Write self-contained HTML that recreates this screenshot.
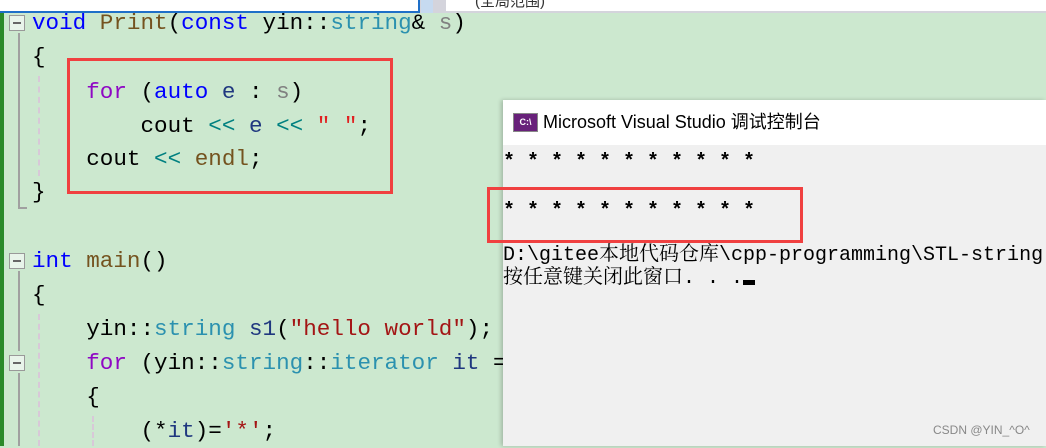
<!DOCTYPE html>
<html><head><meta charset="utf-8"><style>
body{margin:0;width:1046px;height:446px;overflow:hidden;background:#cce8cf;position:relative;font-family:"Liberation Mono","Noto Serif CJK SC",monospace}
.l{position:absolute;left:32px;font-size:22.6px;line-height:34px;white-space:pre;color:#000}
.k{color:#0000ff}.f{color:#74531f}.t{color:#2b91af}.p{color:#808080}.c{color:#8f08c4}.o{color:#008080}.s{color:#a31515}.v{color:#1f377f}.r{color:#e02020}
.box{position:absolute;width:14px;height:14px;border:1.5px solid #999;left:9px;background:#e8f4ea}
.box:after{content:"";position:absolute;left:3px;top:6px;width:8px;height:2px;background:#666}
.red{position:absolute;border:3px solid #f04040}
.con{position:absolute;left:503px;top:100px;right:0;bottom:0;background:#f0f0f0;box-shadow:-2px 0 4px rgba(0,0,0,.2)}
.cl{position:absolute;left:0;font-size:20px;line-height:23px;white-space:pre;color:#000;font-family:"Liberation Mono","Noto Serif CJK SC",monospace}
</style></head><body>
<div style="position:absolute;left:0;top:0;width:1046px;height:13px;background:#d4d4dc"></div>
<div style="position:absolute;left:0;top:0;width:418px;height:11px;background:#fff;border-right:2px solid #1e6fc8;border-bottom:2px solid #1e6fc8"></div>
<div style="position:absolute;left:421px;top:0;width:12px;height:13px;background:#c6daf0"></div>
<div style="position:absolute;left:446px;top:0;width:590px;height:11px;background:#fff;font-family:'Liberation Sans','Noto Sans CJK SC',sans-serif;font-size:15px;line-height:4px;color:#333;padding-left:29px;overflow:hidden">(全局范围)</div>
<div style="position:absolute;left:0;top:13px;width:4px;height:433px;background:#2a8a2a"></div>
<div class="box" style="top:15px"></div>
<div style="position:absolute;left:18px;top:33px;width:2px;height:175px;background:#a0a0a0"></div>
<div style="position:absolute;left:18px;top:207px;width:9px;height:2px;background:#a0a0a0"></div>
<div class="box" style="top:253px"></div>
<div style="position:absolute;left:18px;top:271px;width:2px;height:80px;background:#a0a0a0"></div>
<div class="box" style="top:355px"></div>
<div style="position:absolute;left:18px;top:373px;width:2px;height:73px;background:#a0a0a0"></div>
<div style="position:absolute;left:38px;top:76px;width:0;height:100px;border-left:2px dashed #d8c8d8"></div>
<div style="position:absolute;left:38px;top:314px;width:0;height:132px;border-left:2px dashed #d8c8d8"></div>
<div style="position:absolute;left:92px;top:416px;width:0;height:30px;border-left:2px dashed #d8c8d8"></div>

<div class="l" style="top:6px"><span class="k">void</span> <span class="f">Print</span>(<span class="k">const</span> yin::<span class="t">string</span>&amp; <span class="p">s</span>)</div>
<div class="l" style="top:40px">{</div>
<div class="l" style="top:75px">    <span class="c">for</span> (<span class="k">auto</span> <span class="v">e</span> : <span class="p">s</span>)</div>
<div class="l" style="top:109px">        cout <span class="o">&lt;&lt;</span> <span class="v">e</span> <span class="o">&lt;&lt;</span> <span class="r">" "</span>;</div>
<div class="l" style="top:142px">    cout <span class="o">&lt;&lt;</span> <span class="f">endl</span>;</div>
<div class="l" style="top:175px">}</div>
<div class="l" style="top:244px"><span class="k">int</span> <span class="f">main</span>()</div>
<div class="l" style="top:278px">{</div>
<div class="l" style="top:312px">    yin::<span class="t">string</span> <span class="v">s1</span>(<span class="s">"hello world"</span>);</div>
<div class="l" style="top:346px">    <span class="c">for</span> (yin::<span class="t">string</span>::<span class="t">iterator</span> <span class="v">it</span> =</div>
<div class="l" style="top:380px">    {</div>
<div class="l" style="top:414px">        (*<span class="v">it</span>)=<span class="s">'*'</span>;</div>

<div class="red" style="left:67px;top:58px;width:320px;height:130px"></div>

<div class="con">
<div style="position:absolute;left:0;top:0;right:0;height:45px;background:#fff"></div>
<div style="position:absolute;left:10px;top:13px;width:23px;height:17px;background:#68217a;border:1px solid #888;color:#fff;font:bold 9px 'Liberation Sans',sans-serif;line-height:17px;text-align:center">C:\</div>
<div style="position:absolute;left:40px;top:10px;font-family:'Liberation Sans','Noto Sans CJK SC',sans-serif;font-size:18px;line-height:24px;color:#000">Microsoft Visual Studio 调试控制台</div>
<div class="cl" style="top:51px;font-weight:bold">* * * * * * * * * * *</div>
<div class="cl" style="top:100px;font-weight:bold">* * * * * * * * * * *</div>
<div class="cl" style="top:144px">D:\gitee本地代码仓库\cpp-programming\STL-string</div>
<div class="cl" style="top:167px">按任意键关闭此窗口. . .<span style="display:inline-block;width:12px;height:5px;background:#000;vertical-align:-2px"></span></div>
<div style="position:absolute;left:430px;top:323px;font:12px 'Liberation Sans',sans-serif;color:#888">CSDN @YIN_^O^</div>
</div>
<div class="red" style="left:487px;top:187px;width:310px;height:50px"></div>
</body></html>
